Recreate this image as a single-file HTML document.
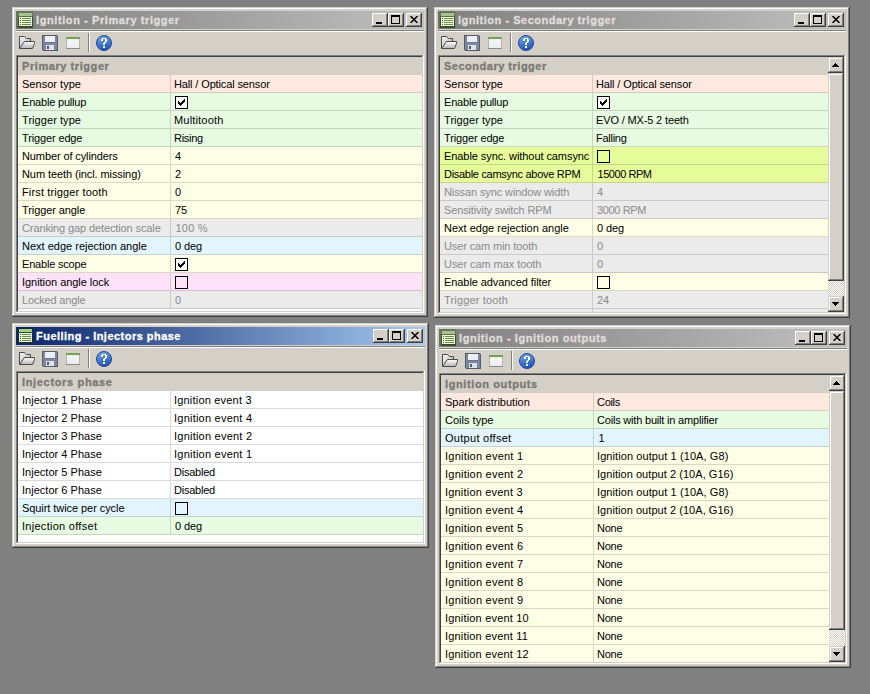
<!DOCTYPE html><html><head><meta charset="utf-8"><style>
*{margin:0;padding:0;box-sizing:border-box}
html,body{width:870px;height:694px;overflow:hidden;background:#808080;font-family:"Liberation Sans",sans-serif;font-size:11px;color:#000}
.win{position:absolute;background:#d4d0c8;box-shadow:inset -1px -1px #404040,inset 1px 1px #d4d0c8,inset -2px -2px #808080,inset 2px 2px #ffffff}
.title{position:absolute;left:4px;top:4px;height:18px;background:linear-gradient(to right,#808080,#c0c0c0)}
.title.act{background:linear-gradient(to right,#0a246a,#a6caf0)}
.ttext{position:absolute;left:20px;top:3px;line-height:13px;font-weight:bold;color:#e0deda;letter-spacing:0.5px;white-space:nowrap;-webkit-text-stroke:0.3px currentColor}
.title.act .ttext{color:#fff}
.btn{position:absolute;top:2px;width:16px;height:14px;background:#d4d0c8;box-shadow:inset -1px -1px #404040,inset 1px 1px #ffffff,inset -2px -2px #808080,inset 2px 2px #d4d0c8}
.gmin{position:absolute;left:4px;top:9px;width:6px;height:2px;background:#000}
.gmax{position:absolute;left:3px;top:2px;width:9px;height:9px;border:1px solid #000;border-top-width:2px}
.etch{position:absolute;left:4px;top:23px;height:2px;border-top:1px solid #808080;border-bottom:1px solid #fff}
.sep{position:absolute;left:76px;top:26px;width:2px;height:19px;border-left:1px solid #808080;border-right:1px solid #fff}
.grid{position:absolute;left:4px;top:48px;background:#fff}
.gin{position:absolute;left:2px;top:2px;overflow:hidden}
.gbord{position:absolute;left:0;top:0;box-shadow:inset -1px -1px #ffffff,inset 1px 1px #808080,inset -2px -2px #d4d0c8,inset 2px 2px #404040}
.hdr{position:absolute;left:0;top:0;height:18px;background:#d4d0c8;color:#7a7874;-webkit-text-stroke:0.3px currentColor;font-weight:bold;letter-spacing:0.5px;padding-left:4px;line-height:18px;white-space:nowrap}
.row{position:absolute;left:0;height:18px;border-bottom:1px solid rgba(70,60,40,0.19)}
.row .lab{position:absolute;left:4px;top:1px;line-height:17px;white-space:nowrap;letter-spacing:-0.2px}
.row .val{position:absolute;top:1px;line-height:17px;white-space:nowrap;letter-spacing:-0.2px}
.row.dis .lab,.row.dis .val{color:#8a8a8a}
.vsep{position:absolute;top:0;width:1px;height:17px;background:rgba(70,60,40,0.19)}
.cb{position:absolute;top:3px;width:13px;height:13px;border:1px solid #000;background:transparent}
.sbtrack{position:absolute;top:0;width:16px;background-color:#fff;background-image:linear-gradient(45deg,#d4d0c8 25%,transparent 25%,transparent 75%,#d4d0c8 75%),linear-gradient(45deg,#d4d0c8 25%,transparent 25%,transparent 75%,#d4d0c8 75%);background-size:2px 2px;background-position:0 0,1px 1px}
.sbbtn,.sbthumb{position:absolute;width:16px;background:#d4d0c8;box-shadow:inset -1px -1px #404040,inset 1px 1px #d4d0c8,inset -2px -2px #808080,inset 2px 2px #ffffff}
.sbbtn{height:16px}

.arrup,.arrdn{position:absolute;left:0;top:0;width:16px;height:16px}
</style></head><body>
<div class="win" style="left:12px;top:7px;width:416px;height:310px">
<div class="title" style="width:408px">
<svg width="18" height="18" viewBox="0 0 18 18" shape-rendering="crispEdges" style="position:absolute;left:0px;top:0px">
<rect x="0" y="0" width="18" height="18" fill="#68745e"/>
<rect x="17" y="0" width="1" height="18" fill="#7a8270"/><rect x="0" y="17" width="18" height="1" fill="#7a8270"/>
<rect x="3" y="2" width="13" height="3" fill="#a6c28e"/>
<rect x="2" y="5" width="15" height="12" fill="#3c4a32"/><rect x="2" y="5" width="15" height="1" fill="#5a7048"/>
<rect x="3" y="6" width="13" height="9" fill="#effcd8"/>
<rect x="4" y="7" width="1" height="1" fill="#3e5630"/><rect x="6" y="7" width="9" height="1" fill="#6a8e50"/>
<rect x="4" y="9" width="1" height="1" fill="#3e5630"/><rect x="6" y="9" width="9" height="1" fill="#6a8e50"/>
<rect x="4" y="11" width="1" height="1" fill="#3e5630"/><rect x="6" y="11" width="9" height="1" fill="#6a8e50"/>
<rect x="4" y="13" width="1" height="1" fill="#3e5630"/><rect x="6" y="13" width="9" height="1" fill="#6a8e50"/>
</svg>
<span class="ttext" style="letter-spacing:0.592px">Ignition - Primary trigger</span>
<div class="btn" style="left:356px"><div class="gmin"></div></div>
<div class="btn" style="left:372px"><div class="gmax"></div></div>
<div class="btn" style="left:390px"><svg width="8" height="7" viewBox="0 0 8 7" style="position:absolute;left:4px;top:3px"><path d="M0.5 0 L7.5 7 M7.5 0 L0.5 7" stroke="#000" stroke-width="1.5"/></svg></div>
</div>
<div class="etch" style="width:408px"></div>
<svg width="17" height="16" viewBox="0 0 17 16" style="position:absolute;left:7px;top:28px">
<defs><linearGradient id="gf19" x1="0" y1="0" x2="0" y2="1"><stop offset="0" stop-color="#ffffff"/><stop offset="1" stop-color="#b4b4b4"/></linearGradient>
<linearGradient id="gb19" x1="0" y1="0" x2="1" y2="1"><stop offset="0" stop-color="#fafafa"/><stop offset="1" stop-color="#a8a8a8"/></linearGradient></defs>
<path d="M0.5 13.5 V1.5 H5.5 L7.5 3.5 H11.5 V6.5" fill="url(#gb19)" stroke="#4a4a4a"/>
<path d="M5.5 6.5 H15.5 V8.5 L13.5 13.5 H0.5 Z" fill="url(#gf19)" stroke="#4a4a4a"/>
</svg>
<svg width="16" height="16" viewBox="0 0 16 16" shape-rendering="crispEdges" style="position:absolute;left:30px;top:28px">
<rect x="0" y="0" width="16" height="16" fill="#565c6c"/>
<rect x="1" y="1" width="14" height="14" fill="#7c86a0"/>
<rect x="3" y="1" width="10" height="6" fill="#eceef6"/>
<rect x="3" y="7" width="10" height="1" fill="#6c7490"/>
<rect x="4" y="10" width="8" height="5" fill="#e0e2ea"/>
<rect x="5" y="11" width="2" height="3" fill="#50566a"/>
<rect x="0" y="15" width="1" height="1" fill="#b8b8c0"/><rect x="15" y="0" width="1" height="1" fill="#b8b8c0"/>
</svg>
<svg width="16" height="16" viewBox="0 0 16 16" shape-rendering="crispEdges" style="position:absolute;left:53px;top:28px">
<defs><linearGradient id="gw19" x1="0" y1="0" x2="0" y2="1"><stop offset="0" stop-color="#e6f8dc"/><stop offset="0.3" stop-color="#f4f4fa"/><stop offset="1" stop-color="#ecebee"/></linearGradient></defs>
<rect x="1" y="2" width="14" height="12" fill="#b4b4b4"/>
<rect x="2" y="4" width="12" height="9" fill="url(#gw19)"/>
<rect x="1" y="2" width="14" height="2" fill="#74a05c"/>
<rect x="1" y="13" width="14" height="1" fill="#8c8c8c"/>
</svg>
<div class="sep"></div>
<svg width="16" height="16" viewBox="0 0 16 16" style="position:absolute;left:84px;top:28px">
<defs><linearGradient id="gh19" x1="0" y1="0" x2="0.3" y2="1"><stop offset="0" stop-color="#78acec"/><stop offset="1" stop-color="#2458b8"/></linearGradient></defs>
<circle cx="8" cy="8" r="7.5" fill="url(#gh19)" stroke="#20449a" stroke-width="1"/>
<path d="M6 3h4v1h-4zM5 4h2v2h-2zM9 4h2v3h-2zM8 7h2v1h-2zM7 8h2v2h-2zM7 11h2v2h-2z" fill="#fff" shape-rendering="crispEdges"/>
</svg>
<div class="grid" style="width:408px;height:258px"><div class="gin" style="width:404px;height:254px">
<div class="hdr" style="width:404px;letter-spacing:0.571px">Primary trigger</div>
<div class="row" style="top:18px;width:404px;background:#fde9df">
<div class="lab" style="letter-spacing:0.02px">Sensor type</div><div class="vsep" style="left:152px"></div>
<div class="val" style="left:156px;letter-spacing:-0.13px">Hall / Optical sensor</div>
</div>
<div class="row" style="top:36px;width:404px;background:#e6fbe2">
<div class="lab" style="letter-spacing:-0.192px">Enable pullup</div><div class="vsep" style="left:152px"></div>
<div class="cb" style="left:157px;background:#fff"><svg width="13" height="13" viewBox="0 0 13 13" shape-rendering="crispEdges" style="position:absolute;left:-1px;top:-1px"><path d="M3 5h1v3h-1zM4 6h1v3h-1zM5 7h1v3h-1zM6 6h1v3h-1zM7 5h1v3h-1zM8 4h1v3h-1zM9 3h1v3h-1z" fill="#000"/></svg></div>
</div>
<div class="row" style="top:54px;width:404px;background:#e6fbe2">
<div class="lab" style="letter-spacing:0.064px">Trigger type</div><div class="vsep" style="left:152px"></div>
<div class="val" style="left:156px;letter-spacing:0.178px">Multitooth</div>
</div>
<div class="row" style="top:72px;width:404px;background:#e6fbe2">
<div class="lab" style="letter-spacing:-0.136px">Trigger edge</div><div class="vsep" style="left:152px"></div>
<div class="val" style="left:156px;letter-spacing:-0.28px">Rising</div>
</div>
<div class="row" style="top:90px;width:404px;background:#fefee6">
<div class="lab" style="letter-spacing:-0.111px">Number of cylinders</div><div class="vsep" style="left:152px"></div>
<div class="val" style="left:157px;letter-spacing:0px">4</div>
</div>
<div class="row" style="top:108px;width:404px;background:#fefee6">
<div class="lab" style="letter-spacing:-0.092px">Num teeth (incl. missing)</div><div class="vsep" style="left:152px"></div>
<div class="val" style="left:157px;letter-spacing:0px">2</div>
</div>
<div class="row" style="top:126px;width:404px;background:#fefee6">
<div class="lab" style="letter-spacing:0.139px">First trigger tooth</div><div class="vsep" style="left:152px"></div>
<div class="val" style="left:157px;letter-spacing:0px">0</div>
</div>
<div class="row" style="top:144px;width:404px;background:#fefee6">
<div class="lab" style="letter-spacing:-0.092px">Trigger angle</div><div class="vsep" style="left:152px"></div>
<div class="val" style="left:157px;letter-spacing:0.0px">75</div>
</div>
<div class="row dis" style="top:162px;width:404px;background:#ebebeb">
<div class="lab" style="letter-spacing:-0.115px">Cranking gap detection scale</div><div class="vsep" style="left:152px"></div>
<div class="val" style="left:157.5px;letter-spacing:0.2px">100 %</div>
</div>
<div class="row" style="top:180px;width:404px;background:#e2f4fd">
<div class="lab" style="letter-spacing:0.004px">Next edge rejection angle</div><div class="vsep" style="left:152px"></div>
<div class="val" style="left:157px;letter-spacing:-0.125px">0 deg</div>
</div>
<div class="row" style="top:198px;width:404px;background:#fefee6">
<div class="lab" style="letter-spacing:-0.191px">Enable scope</div><div class="vsep" style="left:152px"></div>
<div class="cb" style="left:157px;background:#fff"><svg width="13" height="13" viewBox="0 0 13 13" shape-rendering="crispEdges" style="position:absolute;left:-1px;top:-1px"><path d="M3 5h1v3h-1zM4 6h1v3h-1zM5 7h1v3h-1zM6 6h1v3h-1zM7 5h1v3h-1zM8 4h1v3h-1zM9 3h1v3h-1z" fill="#000"/></svg></div>
</div>
<div class="row" style="top:216px;width:404px;background:#fde2f9">
<div class="lab" style="letter-spacing:-0.044px">Ignition angle lock</div><div class="vsep" style="left:152px"></div>
<div class="cb" style="left:157px"></div>
</div>
<div class="row dis" style="top:234px;width:404px;background:#ebebeb">
<div class="lab" style="letter-spacing:-0.173px">Locked angle</div><div class="vsep" style="left:152px"></div>
<div class="val" style="left:157px;letter-spacing:0px">0</div>
</div>
</div><div class="gbord" style="width:408px;height:258px"></div>
</div>
</div>
<div class="win" style="left:434px;top:7px;width:416px;height:311px">
<div class="title" style="width:408px">
<svg width="18" height="18" viewBox="0 0 18 18" shape-rendering="crispEdges" style="position:absolute;left:0px;top:0px">
<rect x="0" y="0" width="18" height="18" fill="#68745e"/>
<rect x="17" y="0" width="1" height="18" fill="#7a8270"/><rect x="0" y="17" width="18" height="1" fill="#7a8270"/>
<rect x="3" y="2" width="13" height="3" fill="#a6c28e"/>
<rect x="2" y="5" width="15" height="12" fill="#3c4a32"/><rect x="2" y="5" width="15" height="1" fill="#5a7048"/>
<rect x="3" y="6" width="13" height="9" fill="#effcd8"/>
<rect x="4" y="7" width="1" height="1" fill="#3e5630"/><rect x="6" y="7" width="9" height="1" fill="#6a8e50"/>
<rect x="4" y="9" width="1" height="1" fill="#3e5630"/><rect x="6" y="9" width="9" height="1" fill="#6a8e50"/>
<rect x="4" y="11" width="1" height="1" fill="#3e5630"/><rect x="6" y="11" width="9" height="1" fill="#6a8e50"/>
<rect x="4" y="13" width="1" height="1" fill="#3e5630"/><rect x="6" y="13" width="9" height="1" fill="#6a8e50"/>
</svg>
<span class="ttext" style="letter-spacing:0.515px">Ignition - Secondary trigger</span>
<div class="btn" style="left:356px"><div class="gmin"></div></div>
<div class="btn" style="left:372px"><div class="gmax"></div></div>
<div class="btn" style="left:390px"><svg width="8" height="7" viewBox="0 0 8 7" style="position:absolute;left:4px;top:3px"><path d="M0.5 0 L7.5 7 M7.5 0 L0.5 7" stroke="#000" stroke-width="1.5"/></svg></div>
</div>
<div class="etch" style="width:408px"></div>
<svg width="17" height="16" viewBox="0 0 17 16" style="position:absolute;left:7px;top:28px">
<defs><linearGradient id="gf441" x1="0" y1="0" x2="0" y2="1"><stop offset="0" stop-color="#ffffff"/><stop offset="1" stop-color="#b4b4b4"/></linearGradient>
<linearGradient id="gb441" x1="0" y1="0" x2="1" y2="1"><stop offset="0" stop-color="#fafafa"/><stop offset="1" stop-color="#a8a8a8"/></linearGradient></defs>
<path d="M0.5 13.5 V1.5 H5.5 L7.5 3.5 H11.5 V6.5" fill="url(#gb441)" stroke="#4a4a4a"/>
<path d="M5.5 6.5 H15.5 V8.5 L13.5 13.5 H0.5 Z" fill="url(#gf441)" stroke="#4a4a4a"/>
</svg>
<svg width="16" height="16" viewBox="0 0 16 16" shape-rendering="crispEdges" style="position:absolute;left:30px;top:28px">
<rect x="0" y="0" width="16" height="16" fill="#565c6c"/>
<rect x="1" y="1" width="14" height="14" fill="#7c86a0"/>
<rect x="3" y="1" width="10" height="6" fill="#eceef6"/>
<rect x="3" y="7" width="10" height="1" fill="#6c7490"/>
<rect x="4" y="10" width="8" height="5" fill="#e0e2ea"/>
<rect x="5" y="11" width="2" height="3" fill="#50566a"/>
<rect x="0" y="15" width="1" height="1" fill="#b8b8c0"/><rect x="15" y="0" width="1" height="1" fill="#b8b8c0"/>
</svg>
<svg width="16" height="16" viewBox="0 0 16 16" shape-rendering="crispEdges" style="position:absolute;left:53px;top:28px">
<defs><linearGradient id="gw441" x1="0" y1="0" x2="0" y2="1"><stop offset="0" stop-color="#e6f8dc"/><stop offset="0.3" stop-color="#f4f4fa"/><stop offset="1" stop-color="#ecebee"/></linearGradient></defs>
<rect x="1" y="2" width="14" height="12" fill="#b4b4b4"/>
<rect x="2" y="4" width="12" height="9" fill="url(#gw441)"/>
<rect x="1" y="2" width="14" height="2" fill="#74a05c"/>
<rect x="1" y="13" width="14" height="1" fill="#8c8c8c"/>
</svg>
<div class="sep"></div>
<svg width="16" height="16" viewBox="0 0 16 16" style="position:absolute;left:84px;top:28px">
<defs><linearGradient id="gh441" x1="0" y1="0" x2="0.3" y2="1"><stop offset="0" stop-color="#78acec"/><stop offset="1" stop-color="#2458b8"/></linearGradient></defs>
<circle cx="8" cy="8" r="7.5" fill="url(#gh441)" stroke="#20449a" stroke-width="1"/>
<path d="M6 3h4v1h-4zM5 4h2v2h-2zM9 4h2v3h-2zM8 7h2v1h-2zM7 8h2v2h-2zM7 11h2v2h-2z" fill="#fff" shape-rendering="crispEdges"/>
</svg>
<div class="grid" style="width:408px;height:259px"><div class="gin" style="width:404px;height:255px">
<div class="hdr" style="width:388px;letter-spacing:0.506px">Secondary trigger</div>
<div class="row" style="top:18px;width:388px;background:#fde9df">
<div class="lab" style="letter-spacing:0.02px">Sensor type</div><div class="vsep" style="left:152px"></div>
<div class="val" style="left:156px;letter-spacing:-0.13px">Hall / Optical sensor</div>
</div>
<div class="row" style="top:36px;width:388px;background:#e6fbe2">
<div class="lab" style="letter-spacing:-0.192px">Enable pullup</div><div class="vsep" style="left:152px"></div>
<div class="cb" style="left:157px;background:#fff"><svg width="13" height="13" viewBox="0 0 13 13" shape-rendering="crispEdges" style="position:absolute;left:-1px;top:-1px"><path d="M3 5h1v3h-1zM4 6h1v3h-1zM5 7h1v3h-1zM6 6h1v3h-1zM7 5h1v3h-1zM8 4h1v3h-1zM9 3h1v3h-1z" fill="#000"/></svg></div>
</div>
<div class="row" style="top:54px;width:388px;background:#e6fbe2">
<div class="lab" style="letter-spacing:0.064px">Trigger type</div><div class="vsep" style="left:152px"></div>
<div class="val" style="left:156px;letter-spacing:-0.147px">EVO / MX-5 2 teeth</div>
</div>
<div class="row" style="top:72px;width:388px;background:#e6fbe2">
<div class="lab" style="letter-spacing:-0.136px">Trigger edge</div><div class="vsep" style="left:152px"></div>
<div class="val" style="left:156px;letter-spacing:-0.267px">Falling</div>
</div>
<div class="row" style="top:90px;width:388px;background:#e6fb9a">
<div class="lab" style="letter-spacing:-0.074px">Enable sync. without camsync</div><div class="vsep" style="left:152px"></div>
<div class="cb" style="left:157px"></div>
</div>
<div class="row" style="top:108px;width:388px;background:#e6fb9a">
<div class="lab" style="letter-spacing:-0.292px">Disable camsync above RPM</div><div class="vsep" style="left:152px"></div>
<div class="val" style="left:157.5px;letter-spacing:-0.45px">15000 RPM</div>
</div>
<div class="row dis" style="top:126px;width:388px;background:#ebebeb">
<div class="lab" style="letter-spacing:-0.109px">Nissan sync window width</div><div class="vsep" style="left:152px"></div>
<div class="val" style="left:157px;letter-spacing:0px">4</div>
</div>
<div class="row dis" style="top:144px;width:388px;background:#ebebeb">
<div class="lab" style="letter-spacing:-0.143px">Sensitivity switch RPM</div><div class="vsep" style="left:152px"></div>
<div class="val" style="left:157px;letter-spacing:-0.371px">3000 RPM</div>
</div>
<div class="row" style="top:162px;width:388px;background:#fefee6">
<div class="lab" style="letter-spacing:0.004px">Next edge rejection angle</div><div class="vsep" style="left:152px"></div>
<div class="val" style="left:157px;letter-spacing:-0.125px">0 deg</div>
</div>
<div class="row dis" style="top:180px;width:388px;background:#ebebeb">
<div class="lab" style="letter-spacing:-0.124px">User cam min tooth</div><div class="vsep" style="left:152px"></div>
<div class="val" style="left:157px;letter-spacing:0px">0</div>
</div>
<div class="row dis" style="top:198px;width:388px;background:#ebebeb">
<div class="lab" style="letter-spacing:-0.059px">User cam max tooth</div><div class="vsep" style="left:152px"></div>
<div class="val" style="left:157px;letter-spacing:0px">0</div>
</div>
<div class="row" style="top:216px;width:388px;background:#fefee6">
<div class="lab" style="letter-spacing:-0.076px">Enable advanced filter</div><div class="vsep" style="left:152px"></div>
<div class="cb" style="left:157px"></div>
</div>
<div class="row dis" style="top:234px;width:388px;background:#ebebeb">
<div class="lab" style="letter-spacing:0.158px">Trigger tooth</div><div class="vsep" style="left:152px"></div>
<div class="val" style="left:157px;letter-spacing:0px">24</div>
</div>
<div class="row dis" style="top:252px;width:388px;background:#ebebeb">
<div class="lab" style="letter-spacing:0px"></div><div class="vsep" style="left:152px"></div>
<div class="val" style="left:156px;letter-spacing:0px"></div>
</div>
<div class="sbtrack" style="left:388px;height:255px"></div>
<div class="sbbtn" style="left:388px;top:0px"><svg class="arrup" viewBox="0 0 16 16" shape-rendering="crispEdges"><path d="M7 6h1v1h-1zM6 7h3v1h-3zM5 8h5v1h-5zM4 9h7v1h-7z" fill="#000"/></svg></div>
<div class="sbthumb" style="left:388px;top:16px;height:208px"></div>
<div class="sbbtn" style="left:388px;top:239px"><svg class="arrdn" viewBox="0 0 16 16" shape-rendering="crispEdges"><path d="M4 6h7v1h-7zM5 7h5v1h-5zM6 8h3v1h-3zM7 9h1v1h-1z" fill="#000"/></svg></div>
</div><div class="gbord" style="width:408px;height:259px"></div>
</div>
</div>
<div class="win" style="left:12px;top:323px;width:417px;height:225px">
<div class="title act" style="width:409px">
<svg width="18" height="18" viewBox="0 0 18 18" shape-rendering="crispEdges" style="position:absolute;left:0px;top:0px">
<rect x="0" y="0" width="18" height="18" fill="#0c2a58"/>
<rect x="17" y="0" width="1" height="18" fill="#0e2a6a"/><rect x="0" y="17" width="18" height="1" fill="#0e2a6a"/>
<rect x="3" y="2" width="13" height="3" fill="#a4d07c"/>
<rect x="2" y="5" width="15" height="12" fill="#1c2c40"/><rect x="2" y="5" width="15" height="1" fill="#2a4a50"/>
<rect x="3" y="6" width="13" height="9" fill="#effcd8"/>
<rect x="4" y="7" width="1" height="1" fill="#3e5630"/><rect x="6" y="7" width="9" height="1" fill="#6a8e50"/>
<rect x="4" y="9" width="1" height="1" fill="#3e5630"/><rect x="6" y="9" width="9" height="1" fill="#6a8e50"/>
<rect x="4" y="11" width="1" height="1" fill="#3e5630"/><rect x="6" y="11" width="9" height="1" fill="#6a8e50"/>
<rect x="4" y="13" width="1" height="1" fill="#3e5630"/><rect x="6" y="13" width="9" height="1" fill="#6a8e50"/>
</svg>
<span class="ttext" style="letter-spacing:0.472px">Fuelling - Injectors phase</span>
<div class="btn" style="left:357px"><div class="gmin"></div></div>
<div class="btn" style="left:373px"><div class="gmax"></div></div>
<div class="btn" style="left:391px"><svg width="8" height="7" viewBox="0 0 8 7" style="position:absolute;left:4px;top:3px"><path d="M0.5 0 L7.5 7 M7.5 0 L0.5 7" stroke="#000" stroke-width="1.5"/></svg></div>
</div>
<div class="etch" style="width:409px"></div>
<svg width="17" height="16" viewBox="0 0 17 16" style="position:absolute;left:7px;top:28px">
<defs><linearGradient id="gf335" x1="0" y1="0" x2="0" y2="1"><stop offset="0" stop-color="#ffffff"/><stop offset="1" stop-color="#b4b4b4"/></linearGradient>
<linearGradient id="gb335" x1="0" y1="0" x2="1" y2="1"><stop offset="0" stop-color="#fafafa"/><stop offset="1" stop-color="#a8a8a8"/></linearGradient></defs>
<path d="M0.5 13.5 V1.5 H5.5 L7.5 3.5 H11.5 V6.5" fill="url(#gb335)" stroke="#4a4a4a"/>
<path d="M5.5 6.5 H15.5 V8.5 L13.5 13.5 H0.5 Z" fill="url(#gf335)" stroke="#4a4a4a"/>
</svg>
<svg width="16" height="16" viewBox="0 0 16 16" shape-rendering="crispEdges" style="position:absolute;left:30px;top:28px">
<rect x="0" y="0" width="16" height="16" fill="#565c6c"/>
<rect x="1" y="1" width="14" height="14" fill="#7c86a0"/>
<rect x="3" y="1" width="10" height="6" fill="#eceef6"/>
<rect x="3" y="7" width="10" height="1" fill="#6c7490"/>
<rect x="4" y="10" width="8" height="5" fill="#e0e2ea"/>
<rect x="5" y="11" width="2" height="3" fill="#50566a"/>
<rect x="0" y="15" width="1" height="1" fill="#b8b8c0"/><rect x="15" y="0" width="1" height="1" fill="#b8b8c0"/>
</svg>
<svg width="16" height="16" viewBox="0 0 16 16" shape-rendering="crispEdges" style="position:absolute;left:53px;top:28px">
<defs><linearGradient id="gw335" x1="0" y1="0" x2="0" y2="1"><stop offset="0" stop-color="#e6f8dc"/><stop offset="0.3" stop-color="#f4f4fa"/><stop offset="1" stop-color="#ecebee"/></linearGradient></defs>
<rect x="1" y="2" width="14" height="12" fill="#b4b4b4"/>
<rect x="2" y="4" width="12" height="9" fill="url(#gw335)"/>
<rect x="1" y="2" width="14" height="2" fill="#74a05c"/>
<rect x="1" y="13" width="14" height="1" fill="#8c8c8c"/>
</svg>
<div class="sep"></div>
<svg width="16" height="16" viewBox="0 0 16 16" style="position:absolute;left:84px;top:28px">
<defs><linearGradient id="gh335" x1="0" y1="0" x2="0.3" y2="1"><stop offset="0" stop-color="#78acec"/><stop offset="1" stop-color="#2458b8"/></linearGradient></defs>
<circle cx="8" cy="8" r="7.5" fill="url(#gh335)" stroke="#20449a" stroke-width="1"/>
<path d="M6 3h4v1h-4zM5 4h2v2h-2zM9 4h2v3h-2zM8 7h2v1h-2zM7 8h2v2h-2zM7 11h2v2h-2z" fill="#fff" shape-rendering="crispEdges"/>
</svg>
<div class="grid" style="width:409px;height:173px"><div class="gin" style="width:405px;height:169px">
<div class="hdr" style="width:405px;letter-spacing:0.664px">Injectors phase</div>
<div class="row" style="top:18px;width:405px;background:#ffffff">
<div class="lab" style="letter-spacing:0.027px">Injector 1 Phase</div><div class="vsep" style="left:152px"></div>
<div class="val" style="left:156px;letter-spacing:0.193px">Ignition event 3</div>
</div>
<div class="row" style="top:36px;width:405px;background:#ffffff">
<div class="lab" style="letter-spacing:0.027px">Injector 2 Phase</div><div class="vsep" style="left:152px"></div>
<div class="val" style="left:156px;letter-spacing:0.227px">Ignition event 4</div>
</div>
<div class="row" style="top:54px;width:405px;background:#ffffff">
<div class="lab" style="letter-spacing:0.027px">Injector 3 Phase</div><div class="vsep" style="left:152px"></div>
<div class="val" style="left:156px;letter-spacing:0.227px">Ignition event 2</div>
</div>
<div class="row" style="top:72px;width:405px;background:#ffffff">
<div class="lab" style="letter-spacing:0.027px">Injector 4 Phase</div><div class="vsep" style="left:152px"></div>
<div class="val" style="left:156px;letter-spacing:0.227px">Ignition event 1</div>
</div>
<div class="row" style="top:90px;width:405px;background:#ffffff">
<div class="lab" style="letter-spacing:0.027px">Injector 5 Phase</div><div class="vsep" style="left:152px"></div>
<div class="val" style="left:156px;letter-spacing:-0.229px">Disabled</div>
</div>
<div class="row" style="top:108px;width:405px;background:#ffffff">
<div class="lab" style="letter-spacing:0.027px">Injector 6 Phase</div><div class="vsep" style="left:152px"></div>
<div class="val" style="left:156px;letter-spacing:-0.229px">Disabled</div>
</div>
<div class="row" style="top:126px;width:405px;background:#e2f4fd">
<div class="lab" style="letter-spacing:-0.067px">Squirt twice per cycle</div><div class="vsep" style="left:152px"></div>
<div class="cb" style="left:157px"></div>
</div>
<div class="row" style="top:144px;width:405px;background:#e6fbe2">
<div class="lab" style="letter-spacing:0.28px">Injection offset</div><div class="vsep" style="left:152px"></div>
<div class="val" style="left:157px;letter-spacing:-0.125px">0 deg</div>
</div>
</div><div class="gbord" style="width:409px;height:173px"></div>
</div>
</div>
<div class="win" style="left:435px;top:325px;width:416px;height:343px">
<div class="title" style="width:408px">
<svg width="18" height="18" viewBox="0 0 18 18" shape-rendering="crispEdges" style="position:absolute;left:0px;top:0px">
<rect x="0" y="0" width="18" height="18" fill="#68745e"/>
<rect x="17" y="0" width="1" height="18" fill="#7a8270"/><rect x="0" y="17" width="18" height="1" fill="#7a8270"/>
<rect x="3" y="2" width="13" height="3" fill="#a6c28e"/>
<rect x="2" y="5" width="15" height="12" fill="#3c4a32"/><rect x="2" y="5" width="15" height="1" fill="#5a7048"/>
<rect x="3" y="6" width="13" height="9" fill="#effcd8"/>
<rect x="4" y="7" width="1" height="1" fill="#3e5630"/><rect x="6" y="7" width="9" height="1" fill="#6a8e50"/>
<rect x="4" y="9" width="1" height="1" fill="#3e5630"/><rect x="6" y="9" width="9" height="1" fill="#6a8e50"/>
<rect x="4" y="11" width="1" height="1" fill="#3e5630"/><rect x="6" y="11" width="9" height="1" fill="#6a8e50"/>
<rect x="4" y="13" width="1" height="1" fill="#3e5630"/><rect x="6" y="13" width="9" height="1" fill="#6a8e50"/>
</svg>
<span class="ttext" style="letter-spacing:0.573px">Ignition - Ignition outputs</span>
<div class="btn" style="left:356px"><div class="gmin"></div></div>
<div class="btn" style="left:372px"><div class="gmax"></div></div>
<div class="btn" style="left:390px"><svg width="8" height="7" viewBox="0 0 8 7" style="position:absolute;left:4px;top:3px"><path d="M0.5 0 L7.5 7 M7.5 0 L0.5 7" stroke="#000" stroke-width="1.5"/></svg></div>
</div>
<div class="etch" style="width:408px"></div>
<svg width="17" height="16" viewBox="0 0 17 16" style="position:absolute;left:7px;top:28px">
<defs><linearGradient id="gf760" x1="0" y1="0" x2="0" y2="1"><stop offset="0" stop-color="#ffffff"/><stop offset="1" stop-color="#b4b4b4"/></linearGradient>
<linearGradient id="gb760" x1="0" y1="0" x2="1" y2="1"><stop offset="0" stop-color="#fafafa"/><stop offset="1" stop-color="#a8a8a8"/></linearGradient></defs>
<path d="M0.5 13.5 V1.5 H5.5 L7.5 3.5 H11.5 V6.5" fill="url(#gb760)" stroke="#4a4a4a"/>
<path d="M5.5 6.5 H15.5 V8.5 L13.5 13.5 H0.5 Z" fill="url(#gf760)" stroke="#4a4a4a"/>
</svg>
<svg width="16" height="16" viewBox="0 0 16 16" shape-rendering="crispEdges" style="position:absolute;left:30px;top:28px">
<rect x="0" y="0" width="16" height="16" fill="#565c6c"/>
<rect x="1" y="1" width="14" height="14" fill="#7c86a0"/>
<rect x="3" y="1" width="10" height="6" fill="#eceef6"/>
<rect x="3" y="7" width="10" height="1" fill="#6c7490"/>
<rect x="4" y="10" width="8" height="5" fill="#e0e2ea"/>
<rect x="5" y="11" width="2" height="3" fill="#50566a"/>
<rect x="0" y="15" width="1" height="1" fill="#b8b8c0"/><rect x="15" y="0" width="1" height="1" fill="#b8b8c0"/>
</svg>
<svg width="16" height="16" viewBox="0 0 16 16" shape-rendering="crispEdges" style="position:absolute;left:53px;top:28px">
<defs><linearGradient id="gw760" x1="0" y1="0" x2="0" y2="1"><stop offset="0" stop-color="#e6f8dc"/><stop offset="0.3" stop-color="#f4f4fa"/><stop offset="1" stop-color="#ecebee"/></linearGradient></defs>
<rect x="1" y="2" width="14" height="12" fill="#b4b4b4"/>
<rect x="2" y="4" width="12" height="9" fill="url(#gw760)"/>
<rect x="1" y="2" width="14" height="2" fill="#74a05c"/>
<rect x="1" y="13" width="14" height="1" fill="#8c8c8c"/>
</svg>
<div class="sep"></div>
<svg width="16" height="16" viewBox="0 0 16 16" style="position:absolute;left:84px;top:28px">
<defs><linearGradient id="gh760" x1="0" y1="0" x2="0.3" y2="1"><stop offset="0" stop-color="#78acec"/><stop offset="1" stop-color="#2458b8"/></linearGradient></defs>
<circle cx="8" cy="8" r="7.5" fill="url(#gh760)" stroke="#20449a" stroke-width="1"/>
<path d="M6 3h4v1h-4zM5 4h2v2h-2zM9 4h2v3h-2zM8 7h2v1h-2zM7 8h2v2h-2zM7 11h2v2h-2z" fill="#fff" shape-rendering="crispEdges"/>
</svg>
<div class="grid" style="width:408px;height:291px"><div class="gin" style="width:404px;height:287px">
<div class="hdr" style="width:388px;letter-spacing:0.607px">Ignition outputs</div>
<div class="row" style="top:18px;width:388px;background:#fde9df">
<div class="lab" style="letter-spacing:-0.012px">Spark distribution</div><div class="vsep" style="left:152px"></div>
<div class="val" style="left:156px;letter-spacing:-0.3px">Coils</div>
</div>
<div class="row" style="top:36px;width:388px;background:#e6fbe2">
<div class="lab" style="letter-spacing:0.011px">Coils type</div><div class="vsep" style="left:152px"></div>
<div class="val" style="left:156px;letter-spacing:-0.193px">Coils with built in amplifier</div>
</div>
<div class="row" style="top:54px;width:388px;background:#e2f4fd">
<div class="lab" style="letter-spacing:0.283px">Output offset</div><div class="vsep" style="left:152px"></div>
<div class="val" style="left:157.5px;letter-spacing:0px">1</div>
</div>
<div class="row" style="top:72px;width:388px;background:#fefee6">
<div class="lab" style="letter-spacing:0.227px">Ignition event 1</div><div class="vsep" style="left:152px"></div>
<div class="val" style="left:156px;letter-spacing:0.088px">Ignition output 1 (10A, G8)</div>
</div>
<div class="row" style="top:90px;width:388px;background:#fefee6">
<div class="lab" style="letter-spacing:0.227px">Ignition event 2</div><div class="vsep" style="left:152px"></div>
<div class="val" style="left:156px;letter-spacing:0.048px">Ignition output 2 (10A, G16)</div>
</div>
<div class="row" style="top:108px;width:388px;background:#fefee6">
<div class="lab" style="letter-spacing:0.193px">Ignition event 3</div><div class="vsep" style="left:152px"></div>
<div class="val" style="left:156px;letter-spacing:0.088px">Ignition output 1 (10A, G8)</div>
</div>
<div class="row" style="top:126px;width:388px;background:#fefee6">
<div class="lab" style="letter-spacing:0.227px">Ignition event 4</div><div class="vsep" style="left:152px"></div>
<div class="val" style="left:156px;letter-spacing:0.048px">Ignition output 2 (10A, G16)</div>
</div>
<div class="row" style="top:144px;width:388px;background:#fefee6">
<div class="lab" style="letter-spacing:0.227px">Ignition event 5</div><div class="vsep" style="left:152px"></div>
<div class="val" style="left:156px;letter-spacing:-0.233px">None</div>
</div>
<div class="row" style="top:162px;width:388px;background:#fefee6">
<div class="lab" style="letter-spacing:0.227px">Ignition event 6</div><div class="vsep" style="left:152px"></div>
<div class="val" style="left:156px;letter-spacing:-0.233px">None</div>
</div>
<div class="row" style="top:180px;width:388px;background:#fefee6">
<div class="lab" style="letter-spacing:0.227px">Ignition event 7</div><div class="vsep" style="left:152px"></div>
<div class="val" style="left:156px;letter-spacing:-0.233px">None</div>
</div>
<div class="row" style="top:198px;width:388px;background:#fefee6">
<div class="lab" style="letter-spacing:0.227px">Ignition event 8</div><div class="vsep" style="left:152px"></div>
<div class="val" style="left:156px;letter-spacing:-0.233px">None</div>
</div>
<div class="row" style="top:216px;width:388px;background:#fefee6">
<div class="lab" style="letter-spacing:0.227px">Ignition event 9</div><div class="vsep" style="left:152px"></div>
<div class="val" style="left:156px;letter-spacing:-0.233px">None</div>
</div>
<div class="row" style="top:234px;width:388px;background:#fefee6">
<div class="lab" style="letter-spacing:0.181px">Ignition event 10</div><div class="vsep" style="left:152px"></div>
<div class="val" style="left:156px;letter-spacing:-0.233px">None</div>
</div>
<div class="row" style="top:252px;width:388px;background:#fefee6">
<div class="lab" style="letter-spacing:0.181px">Ignition event 11</div><div class="vsep" style="left:152px"></div>
<div class="val" style="left:156px;letter-spacing:-0.233px">None</div>
</div>
<div class="row" style="top:270px;width:388px;background:#fefee6">
<div class="lab" style="letter-spacing:0.181px">Ignition event 12</div><div class="vsep" style="left:152px"></div>
<div class="val" style="left:156px;letter-spacing:-0.233px">None</div>
</div>
<div class="sbtrack" style="left:388px;height:287px"></div>
<div class="sbbtn" style="left:388px;top:0px"><svg class="arrup" viewBox="0 0 16 16" shape-rendering="crispEdges"><path d="M7 6h1v1h-1zM6 7h3v1h-3zM5 8h5v1h-5zM4 9h7v1h-7z" fill="#000"/></svg></div>
<div class="sbthumb" style="left:388px;top:16px;height:239px"></div>
<div class="sbbtn" style="left:388px;top:271px"><svg class="arrdn" viewBox="0 0 16 16" shape-rendering="crispEdges"><path d="M4 6h7v1h-7zM5 7h5v1h-5zM6 8h3v1h-3zM7 9h1v1h-1z" fill="#000"/></svg></div>
</div><div class="gbord" style="width:408px;height:291px"></div>
</div>
</div>
</body></html>
